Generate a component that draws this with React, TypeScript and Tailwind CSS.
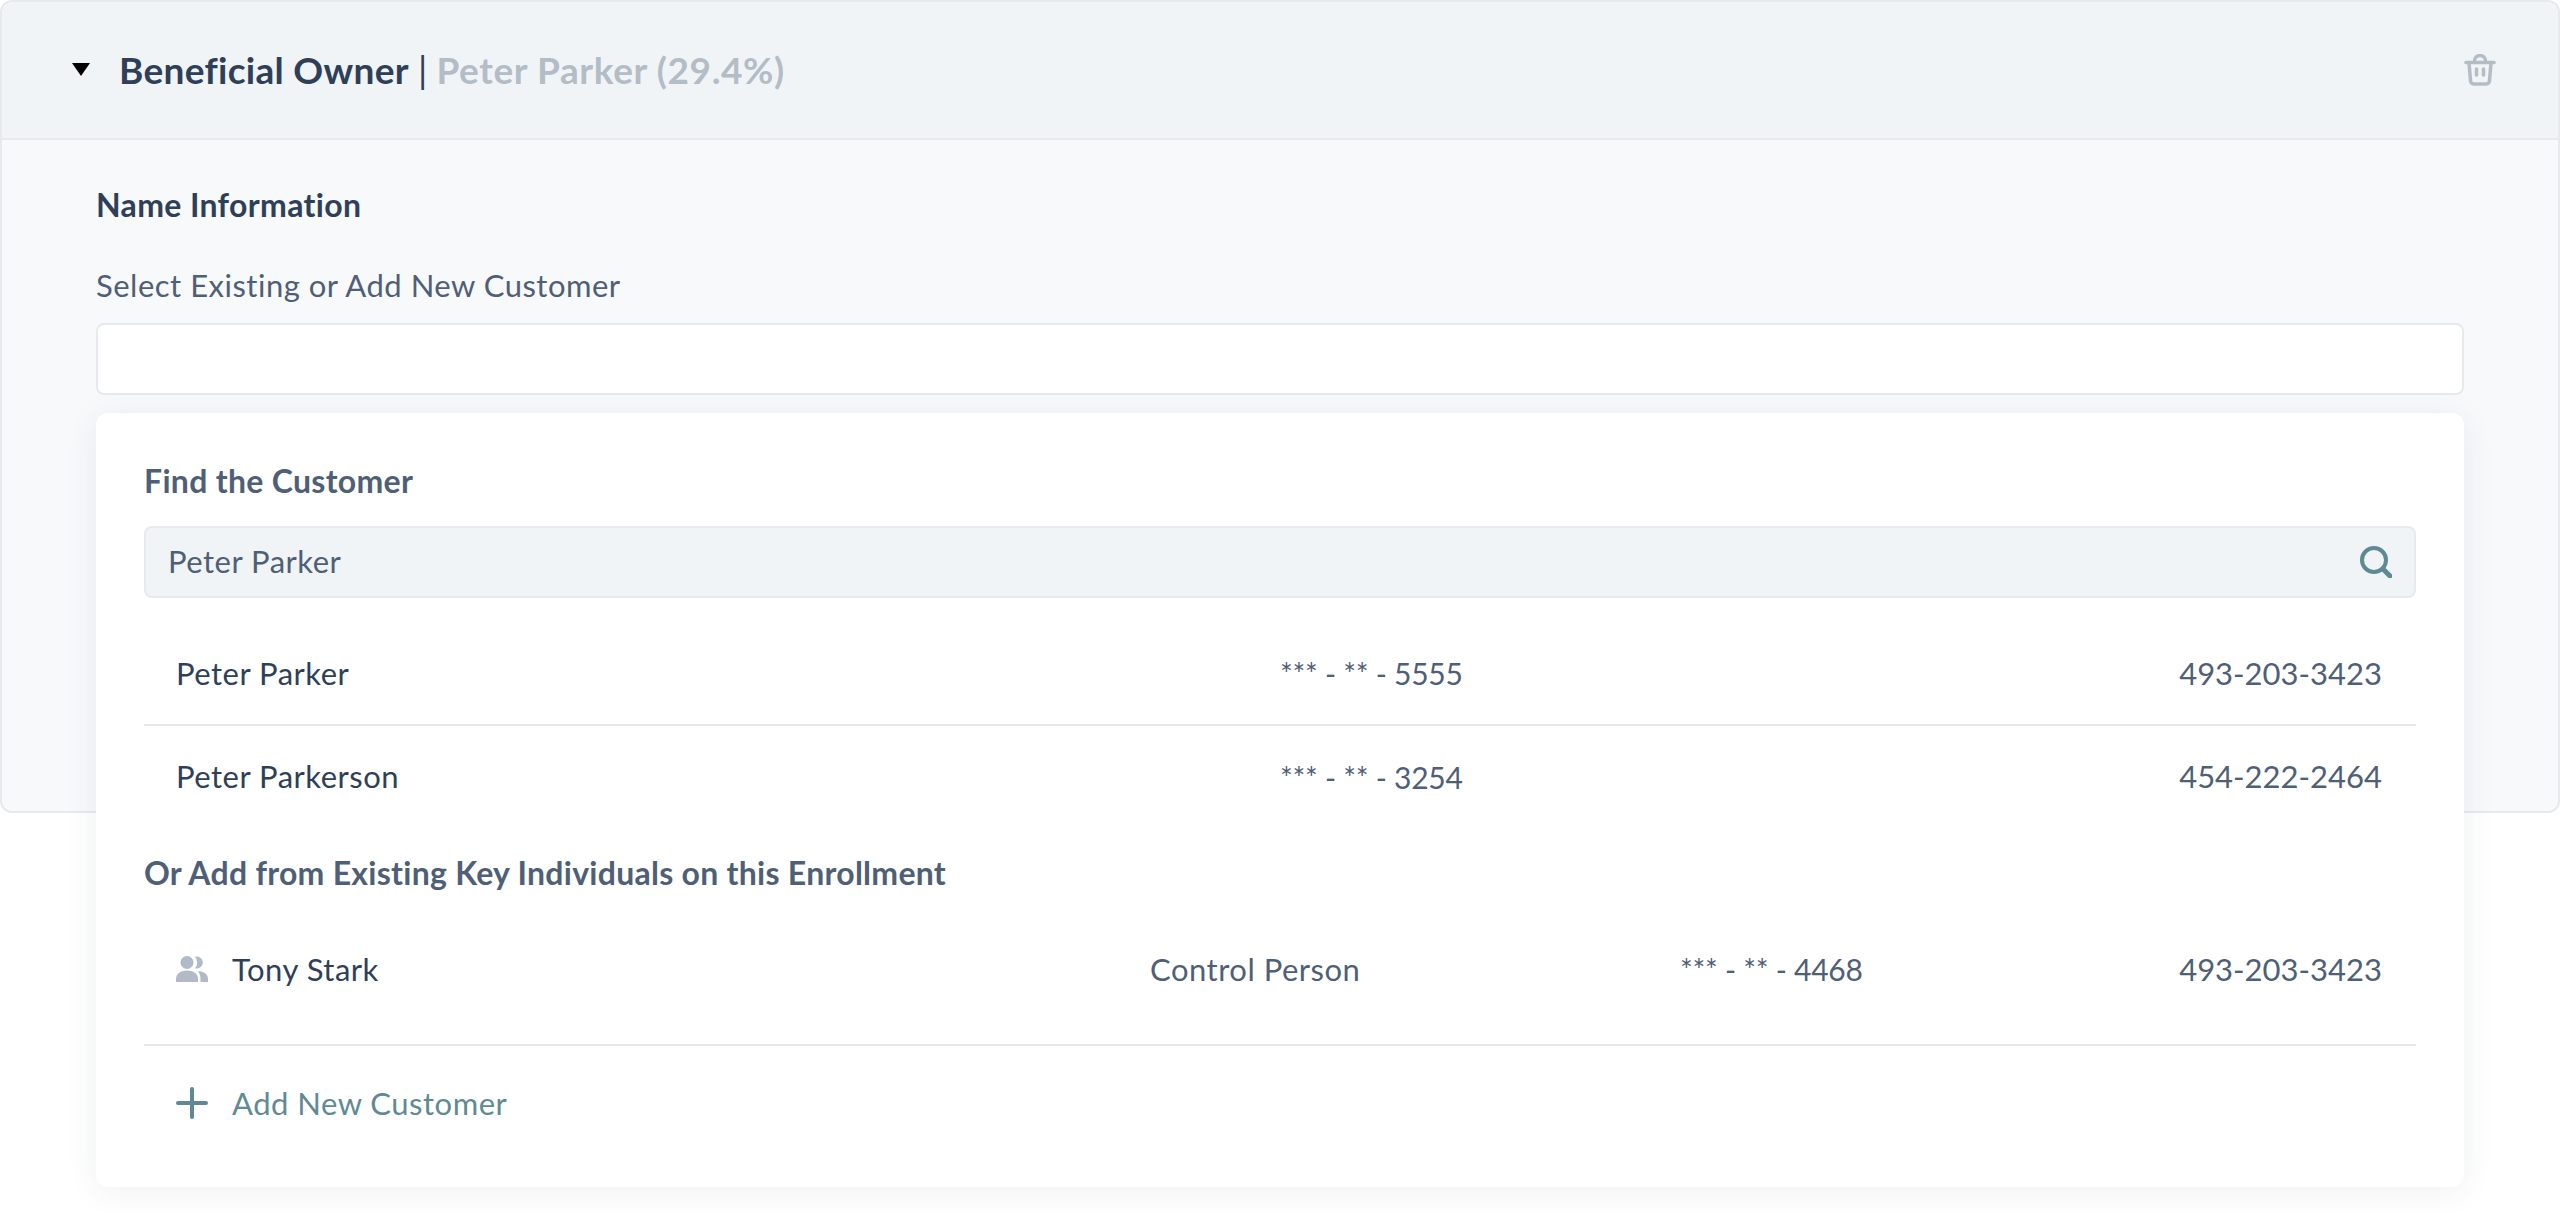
import React from "react";

const font = "font-['Lato','Liberation_Sans',sans-serif]";

function TrashIcon() {
    return (
        <svg width="32" height="32" viewBox="0 0 32 32" fill="none" stroke="#b4bcc6" strokeWidth="3.500" strokeLinecap="round" strokeLinejoin="round">
            <path d="M2 8.500h28" />
            <path d="M10.500 8V7a5.500 5.500 0 0 1 11 0V8" />
            <path d="M5 9l1.500 17.500a3.500 3.500 0 0 0 3.500 3.500h12a3.500 3.500 0 0 0 3.500-3.500L27 9" />
            <path d="M12.500 15v6M19.500 15v6" />
        </svg>
    );
}

function SearchIcon() {
    return (
        <svg width="32" height="32" viewBox="0 0 32 32" fill="none" stroke="#5f8a93" strokeWidth="4" strokeLinecap="round">
            <circle cx="14" cy="14" r="12" />
            <path d="M23 23l7 7" strokeWidth="5" />
        </svg>
    );
}

function PeopleIcon() {
    return (
        <svg width="32" height="26" viewBox="0 0 32 26" fill="#b1bac6">
            <circle cx="11" cy="6.500" r="6.500" />
            <path d="M0 26v-3C0 17.500 5 14.500 11 14.500S22 17.500 22 23v3z" />
            <path d="M19 .8a6 6 0 1 1 0 11.400a8.500 8.500 0 0 0 0-11.400z" />
            <path d="M22 15c6 .5 10 3 10 8v3h-7.500v-3c0-3-.8-5.500-2.500-8z" />
        </svg>
    );
}

function Row({ name, ssn, phone, border }: { name: string; ssn: string; phone: string; border?: boolean }) {
    return (
        <div className={`grid grid-cols-[1104px_1fr_auto] items-center pl-8 pr-[34px] h-[104px] ${border ? "border-b-2 border-[#e6eaee]" : "pb-[3px]"}`}>
            <span className="text-[#2f3f58]">{name}</span>
            <span className="text-[30px] tracking-[-0.25px]">{ssn}</span>
            <span className="tracking-normal">{phone}</span>
        </div>
    );
}

export default function App() {
    return (
        <div className={`${font} relative w-full h-[1214px] bg-white text-[31px] tracking-[0.5px] leading-none text-[#4f5f76] overflow-hidden`}>
            <div className="h-[813px] rounded-xl border-2 border-[#e6eaee] bg-[#f8f9fb]">
                <div className="flex items-center justify-between h-[138px] rounded-t-xl border-b-2 border-[#e6eaee] bg-[#f0f4f7] pl-[70px] pr-[62px]">
                    <div className="flex items-center pb-[2px] text-[37px] tracking-[0.3px]">
                        <span className="w-0 h-0 mr-[29px] border-x-[9px] border-t-[13px] border-x-transparent border-t-black" />
                        <span className="font-bold text-[#2f3f58]">Beneficial Owner</span>
                        <span className="text-[#2f3f58] mx-[9px]">|</span>
                        <span className="font-bold tracking-[0.6px] text-[#b4bcc6]">Peter Parker (29.4%)</span>
                    </div>
                    <TrashIcon />
                </div>
                <div className="pl-[94px] pr-[94px]">
                    <h2 className="mt-[49px] text-[32px] tracking-[0.35px] font-bold text-[#2f3f58]">Name Information</h2>
                    <label className="block mt-[49px]">Select Existing or Add New Customer</label>
                    <div className="mt-[22px] h-[72px] rounded-lg border-2 border-[#e6eaee] bg-white" />
                </div>
            </div>

            {/* dropdown */}
            <div className="absolute left-[96px] top-[413px] w-[2368px] h-[774px] rounded-xl bg-white px-12 pt-[52px] shadow-[0_4px_32px_rgba(45,61,85,0.08)]">
                <h3 className="text-[32px] tracking-[0.3px] font-bold">Find the Customer</h3>
                <div className="flex items-center justify-between mt-[29px] h-[72px] rounded-lg border-2 border-[#e6eaee] bg-[#f0f4f7] pl-[22px] pr-[22px]">
                    <span className="-mt-[2px]">Peter Parker</span>
                    <SearchIcon />
                </div>
                <div className="mt-6">
                    <Row name="Peter Parker" ssn="*** - ** - 5555" phone="493-203-3423" border />
                    <Row name="Peter Parkerson" ssn="*** - ** - 3254" phone="454-222-2464" />
                </div>
                <h3 className="mt-[27px] text-[32px] tracking-[0.27px] font-bold">Or Add from Existing Key Individuals on this Enrollment</h3>
                <div className="grid grid-cols-[974px_530px_1fr_auto] items-center pl-8 pr-[34px] mt-[33px] h-[124px] border-b-2 border-[#e6eaee] pb-[28px]">
                    <span className="flex items-center gap-[24px] text-[#2f3f58]">
                        <PeopleIcon />
                        Tony Stark
                    </span>
                    <span>Control Person</span>
                    <span className="text-[30px] tracking-[-0.25px]">*** - ** - 4468</span>
                    <span className="tracking-normal">493-203-3423</span>
                </div>
                <div className="flex items-center gap-[24px] px-8 mt-[41px] text-[#5f8a93]">
                    <svg width="32" height="32" viewBox="0 0 32 32" stroke="#5f8a93" strokeWidth="4" strokeLinecap="round">
                        <path d="M16 2v28M2 16h28" />
                    </svg>
                    Add New Customer
                </div>
            </div>
        </div>
    );
}
